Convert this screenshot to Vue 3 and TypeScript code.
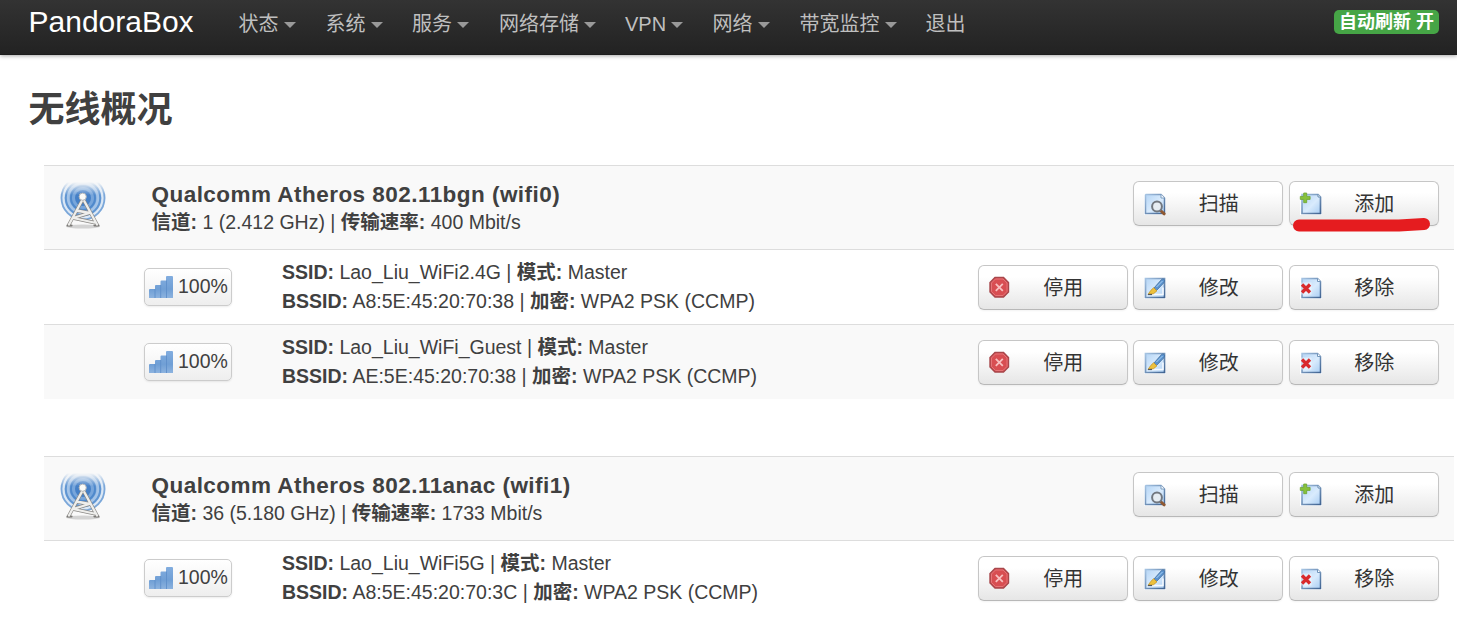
<script setup lang="ts">
type Action = 'scan' | 'add' | 'stop' | 'edit' | 'remove'

interface Network {
  ssid: string
  bssid: string
}

interface Radio {
  name: string
  channel: string
  rate: string
  marked: boolean
  networks: Network[]
}

const menu: { label: string; caret: boolean; width: number }[] = [
  { label: '状态', caret: true, width: 87 },
  { label: '系统', caret: true, width: 86.5 },
  { label: '服务', caret: true, width: 87 },
  { label: '网络存储', caret: true, width: 126 },
  { label: 'VPN', caret: true, width: 87.5 },
  { label: '网络', caret: true, width: 87 },
  { label: '带宽监控', caret: true, width: 126 },
  { label: '退出', caret: false, width: 60 },
]

const labels: Record<Action, string> = {
  scan: '扫描',
  add: '添加',
  stop: '停用',
  edit: '修改',
  remove: '移除',
}

const radioActions: Action[] = ['scan', 'add']
const networkActions: Action[] = ['stop', 'edit', 'remove']

const radios: Radio[] = [
  {
    name: 'Qualcomm Atheros 802.11bgn (wifi0)',
    channel: '1 (2.412 GHz)',
    rate: '400 Mbit/s',
    marked: true,
    networks: [
      { ssid: 'Lao_Liu_WiFi2.4G', bssid: 'A8:5E:45:20:70:38' },
      { ssid: 'Lao_Liu_WiFi_Guest', bssid: 'AE:5E:45:20:70:38' },
    ],
  },
  {
    name: 'Qualcomm Atheros 802.11anac (wifi1)',
    channel: '36 (5.180 GHz)',
    rate: '1733 Mbit/s',
    marked: false,
    networks: [{ ssid: 'Lao_Liu_WiFi5G', bssid: 'A8:5E:45:20:70:3C' }],
  },
]
</script>

<template>
  <div class="page">
    <svg class="defs" width="0" height="0" aria-hidden="true">
      <defs>
        <linearGradient id="paper" x1="0" y1="0" x2="1" y2="1">
          <stop offset="0" stop-color="#b5d5f5" />
          <stop offset=".55" stop-color="#d9ebfd" />
          <stop offset="1" stop-color="#a9cdf2" />
        </linearGradient>
        <linearGradient id="edge" x1="0" y1="0" x2="1" y2="1">
          <stop offset="0" stop-color="#a5c3e2" />
          <stop offset="1" stop-color="#416492" />
        </linearGradient>
        <linearGradient id="bars" x1="0" y1="0" x2="0" y2="1">
          <stop offset="0" stop-color="#82addf" />
          <stop offset=".6" stop-color="#709fd5" />
          <stop offset="1" stop-color="#8db3df" />
        </linearGradient>
        <linearGradient id="fade" gradientUnits="userSpaceOnUse" x1="0" y1="1" x2="0" y2="14">
          <stop offset="0" stop-color="#fff" stop-opacity="0" />
          <stop offset="1" stop-color="#fff" />
        </linearGradient>
        <mask id="waves"><rect width="50" height="50" fill="url(#fade)" /></mask>
      </defs>
    </svg>

    <header class="topbar">
      <a class="brand">PandoraBox</a>
      <nav class="menu">
        <a v-for="item in menu" :key="item.label" :style="{ width: item.width + 'px' }">
          <span>{{ item.label }}</span><i v-if="item.caret" class="caret"></i>
        </a>
      </nav>
      <span class="refresh">自动刷新 开</span>
    </header>

    <main>
      <h2>无线概况</h2>
      <section v-for="radio in radios" :key="radio.name" class="radio">
        <div class="row head">
          <svg class="antenna" width="50" height="50" viewBox="0 0 50 50">
            <ellipse cx="25" cy="45.500" rx="17" ry="2" fill="#b9b9b9" opacity=".6" />
            <g mask="url(#waves)">
              <circle cx="25" cy="17" r="22.500" fill="#dce8f5" />
              <circle cx="25" cy="17" r="21.500" fill="none" stroke="#7ba7d9" stroke-width="1.800" />
              <circle cx="25" cy="17" r="18.500" fill="#a4c4e8" />
              <circle cx="25" cy="17" r="17.200" fill="none" stroke="#5f95d2" stroke-width="2" />
              <circle cx="25" cy="17" r="13.500" fill="#78a6db" />
              <circle cx="25" cy="17" r="12" fill="none" stroke="#4f89cc" stroke-width="2" />
              <circle cx="25" cy="17" r="8" fill="#4580c7" />
            </g>
            <g fill="none" stroke-linecap="round" stroke-linejoin="round">
              <path d="M23.800 20L11 43.500M26.200 20L39 43.500M18.500 29.500L31.500 32L15 37L36 41.500" stroke="#8b8986" stroke-width="3.600" />
              <path d="M9.500 44.500h4M36.500 44.500h4" stroke="#7b7976" stroke-width="2.200" />
              <path d="M23.800 20L11 43.500M26.200 20L39 43.500M18.500 29.500L31.500 32L15 37L36 41.500" stroke="#eeeeec" stroke-width="2.300" />
            </g>
            <circle cx="24.700" cy="15.700" r="3.600" fill="#fbfbf8" stroke="#b2b6bb" stroke-width="1" />
          </svg>
          <div class="info">
            <strong class="name">{{ radio.name }}</strong>
            <div class="line"><b>信道:</b> {{ radio.channel }} | <b>传输速率:</b> {{ radio.rate }}</div>
          </div>
          <div class="actions">
            <button v-for="action in radioActions" :key="action" type="button" class="btn">
              <svg v-if="action === 'scan'" width="24" height="24" viewBox="0 0 24 24">
                <path d="M1 1h22v22H1z" fill="#fff" />
                <path d="M3 2.500h15l3.500 3.500v15.500H2.500V3z" fill="url(#paper)" stroke="url(#edge)" stroke-width="1.500" />
                <path d="M18 2.500V6h3.500" fill="#fff" stroke="#7b9dc0" />
                <path d="M17.500 18.500l3.700 3.300" stroke="#8f5932" stroke-width="3" stroke-linecap="round" />
                <circle cx="14" cy="14.500" r="4.900" fill="#e6edf3" stroke="#727880" stroke-width="2" />
              </svg>
              <svg v-else width="24" height="24" viewBox="0 0 24 24">
                <path d="M1 1h22v22H1z" fill="#fff" />
                <path d="M3 2.500h16l2.500 2.500v16.500H3z" fill="url(#paper)" stroke="url(#edge)" stroke-width="1.700" />
                <path d="M19 2.500V5h2.500" fill="#fff" stroke="#678baf" />
                <path d="M4.700 1h3v3.400h3.400v3H7.700v3.300h-3V7.400H1.300v-3h3.400z" fill="#87c23b" stroke="#6ca331" stroke-width=".8" />
              </svg>
              <span>{{ labels[action] }}</span>
            </button>
            <svg v-if="radio.marked" class="marker" width="140" height="16" viewBox="0 0 140 16">
              <path d="M7 8.500H107L132 7" fill="none" stroke="#e51c1f" stroke-width="12" stroke-linecap="round" stroke-linejoin="round" />
            </svg>
          </div>
        </div>

        <div v-for="net in radio.networks" :key="net.ssid" class="row net">
          <div class="signal">
            <svg width="24" height="24" viewBox="0 0 24 24">
              <path d="M0 15q0-1 1-1h5v-3q0-1 1-1h4.500V6.500q0-1 1-1H17V2q0-1 1-1h5q1 0 1 1v21H0z" fill="url(#bars)" />
              <path d="M6 14v9M11.700 10v13M17.500 5.500v17.500" stroke="#5f8fc9" stroke-width=".9" />
            </svg>
            <span>100%</span>
          </div>
          <div class="info">
            <div class="line"><b>SSID:</b> {{ net.ssid }} | <b>模式:</b> Master</div>
            <div class="line"><b>BSSID:</b> {{ net.bssid }} | <b>加密:</b> WPA2 PSK (CCMP)</div>
          </div>
          <div class="actions">
            <button v-for="action in networkActions" :key="action" type="button" class="btn">
              <svg v-if="action === 'stop'" width="24" height="24" viewBox="0 0 24 24">
                <path d="M7 1.500h8.500l5 5V16l-5 5H7l-5-5V6.500z" fill="#d84e52" stroke="#a8474b" stroke-width="1.400" />
                <path d="M7.500 3h7.500l4 4v8.500l-4 4H7.500l-4-4V7z" fill="none" stroke="#e57578" />
                <path d="M7.800 7.800l7 7M14.800 7.800l-7 7" stroke="#f8c0c0" stroke-width="1.800" />
              </svg>
              <svg v-else-if="action === 'edit'" width="24" height="24" viewBox="0 0 24 24">
                <path d="M1 1h22v22H1z" fill="#fff" />
                <path d="M2.500 2.500h19v19h-19z" fill="url(#paper)" stroke="url(#edge)" stroke-width="1.700" />
                <path d="M8 18.500h12v-7" fill="none" stroke="#f6faff" stroke-width="1.500" />
                <path d="M11 12L18.500 3.500q1.500-1.200 2.700 0T20.700 7l-7.200 7.500z" fill="#5b93cf" stroke="#42709f" stroke-width=".8" />
                <path d="M13.500 11l6-6" stroke="#a8d2f5" />
                <path d="M10.700 11.700l3.200 3.200-3.400 2.800L5 18.500l2.700-4z" fill="#edc13d" stroke="#c59528" stroke-width=".8" />
                <path d="M5 18.500h4" stroke="#55585b" stroke-width="1.200" />
              </svg>
              <svg v-else width="24" height="24" viewBox="0 0 24 24">
                <path d="M1 1h22v22H1z" fill="#fff" />
                <path d="M3 2.500h15.500l3 3v16H3z" fill="url(#paper)" stroke="url(#edge)" stroke-width="1.500" />
                <path d="M18.500 2.500v3h3" fill="#fff" stroke="#7195ba" />
                <path d="M1 6.500h11.500v12H1z" fill="#fff" opacity=".45" />
                <path d="M3 8.500l8 8M11 8.500l-8 8" stroke="#d92a2d" stroke-width="3.300" />
              </svg>
              <span>{{ labels[action] }}</span>
            </button>
          </div>
        </div>
      </section>
    </main>
  </div>
</template>

<style>
body {
  background: #fff;
  overflow: hidden;
}
</style>

<style scoped>
.page {
  height: 630px;
  overflow: hidden;
  color: #404040;
  font: 19.5px/29px "Liberation Sans", Arial, "Noto Sans CJK SC", sans-serif;
}

.defs {
  position: absolute;
}

.topbar {
  display: flex;
  align-items: flex-start;
  height: 55px;
  padding: 0 18px 0 28.5px;
  box-sizing: border-box;
  background: linear-gradient(#333, #222);
  box-shadow: 0 1px 4px rgba(0, 0, 0, .35), inset 0 -1px rgba(0, 0, 0, .15);
}

.brand {
  width: 210px;
  font-size: 30px;
  line-height: 43px;
  color: #fff;
}

.menu {
  display: flex;
  font-size: 20px;
  line-height: 49px;
  color: #bfbfbf;
}

.menu a {
  display: flex;
  align-items: center;
  white-space: nowrap;
}

.caret {
  margin: 1px 0 0 5px;
  border: 6px solid transparent;
  border-top-color: #999;
  border-bottom: 0;
}

.refresh {
  margin: 10px 0 0 auto;
  width: 105px;
  height: 24px;
  border-radius: 5px;
  background: #46a546;
  color: #fff;
  font-size: 18px;
  font-weight: bold;
  line-height: 25px;
  text-align: center;
  white-space: nowrap;
}

h2 {
  margin: 0;
  padding: 29px 0 0 28.5px;
  height: 81px;
  font-size: 36px;
  line-height: 52px;
}

.radio {
  width: 1410px;
  margin: 0 0 57px 44px;
}

.row {
  display: flex;
  box-sizing: border-box;
  border-top: 1px solid #ddd;
}

.head {
  height: 84px;
  padding: 15px 15px 0 14px;
  background: #f9f9f9;
}

.net {
  height: 75px;
  padding: 15px 15px 0 100px;
}

.net:nth-child(odd) {
  background: #f9f9f9;
}

.antenna {
  flex: none;
}

.head .info {
  padding-left: 43.5px;
}

.name {
  display: block;
  font-size: 22.5px;
  line-height: 27px;
  letter-spacing: .46px;
}

.net .info {
  margin: -7px 0 0 50px;
}

.line {
  height: 29px;
  white-space: nowrap;
}

.signal {
  display: flex;
  align-items: center;
  gap: 5px;
  width: 88px;
  height: 38px;
  margin-top: 3px;
  padding-left: 4px;
  box-sizing: border-box;
  border: 1px solid #ccc;
  border-radius: 5px;
  background: linear-gradient(#fff, #eee);
  box-shadow: 0 1px 2px rgba(0, 0, 0, .08);
}

.signal span {
  line-height: 27px;
  padding-bottom: 2px;
}

.actions {
  position: relative;
  display: flex;
  gap: 5.5px;
  margin: 0 .3px 0 auto;
}

.btn {
  display: flex;
  align-items: center;
  width: 150px;
  height: 45px;
  padding: 0 0 0 9px;
  border: 1px solid #c6c6c6;
  border-bottom-color: #b8b8b8;
  border-radius: 6px;
  background: linear-gradient(#fff 25%, #e6e6e6);
  box-shadow: inset 0 1px 0 rgba(255, 255, 255, .2), 0 1px 2px rgba(0, 0, 0, .05);
  color: #333;
  font: inherit;
  font-size: 20px;
}

.btn svg {
  flex: none;
}

.btn span {
  margin-left: 31.5px;
  padding-top: 2px;
}

.marker {
  position: absolute;
  left: 158.5px;
  top: 36px;
}
</style>
